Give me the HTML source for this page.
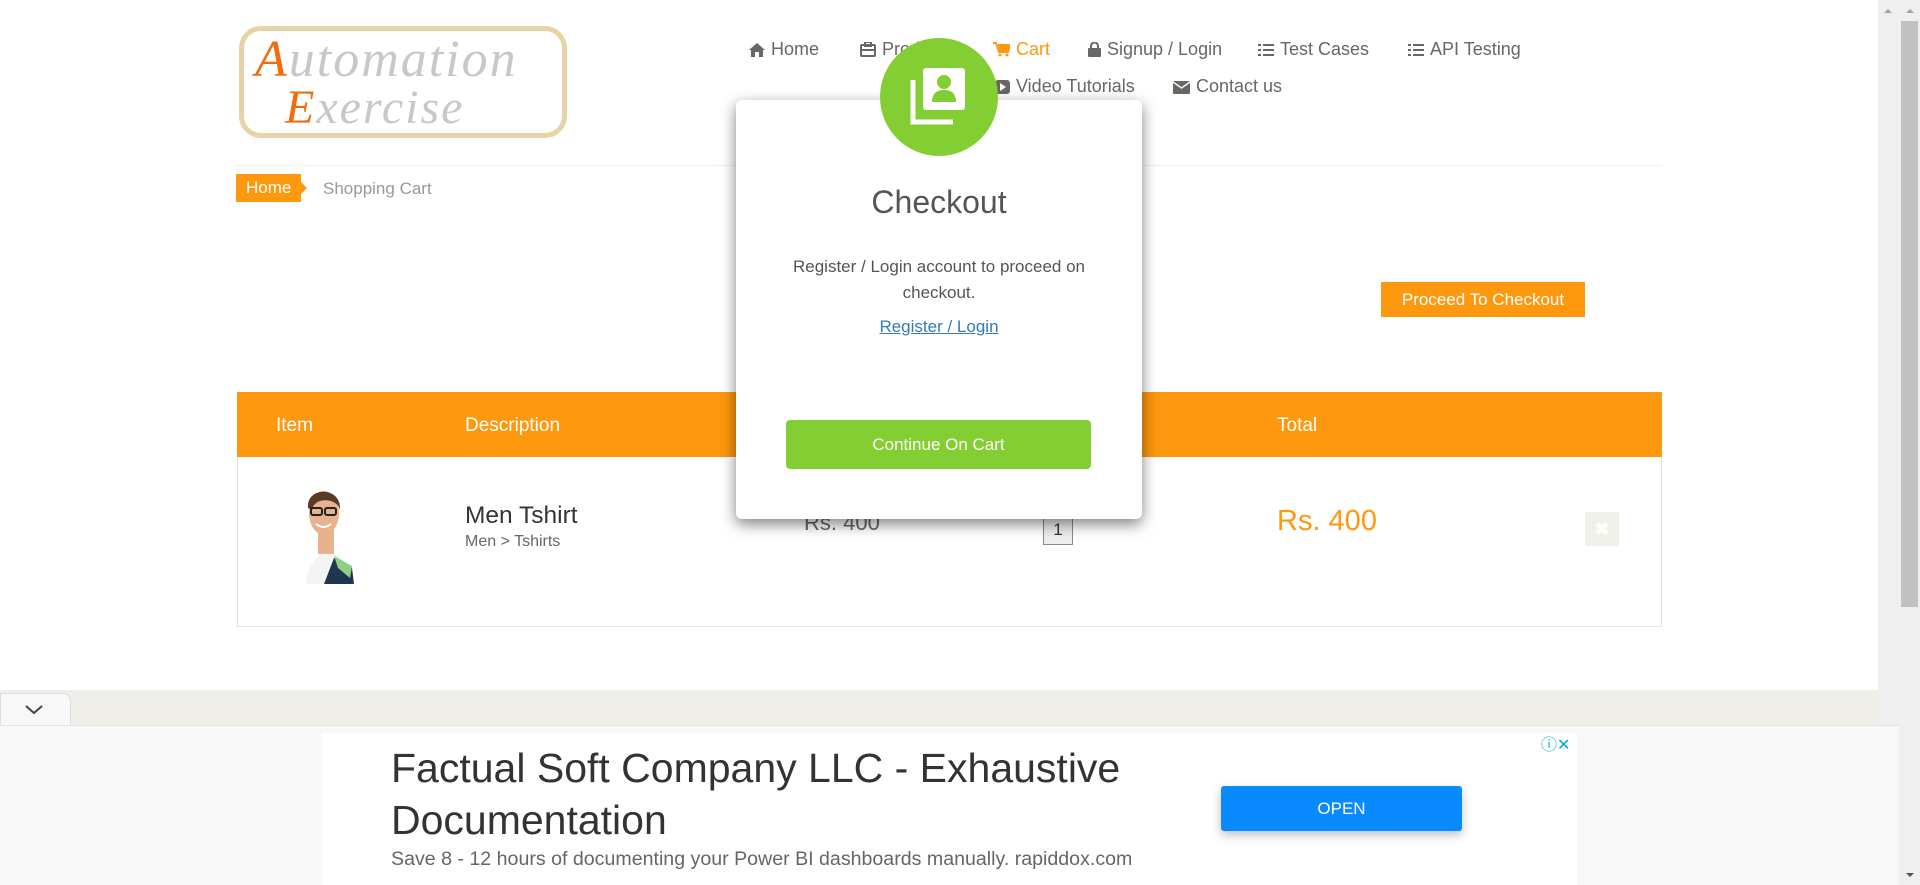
<!DOCTYPE html>
<html><head><meta charset="utf-8"><style>
*{margin:0;padding:0;box-sizing:border-box}
body{width:1920px;height:885px;overflow:hidden;background:#fff;font-family:"Liberation Sans",Arial,sans-serif;position:relative;color:#696763}
.a{position:absolute}
.nav{font-size:18px;color:#696763;white-space:nowrap}
.nav svg{vertical-align:-2px;margin-right:6px}
</style></head><body>
<div class="a" style="left:239px;top:26px;width:328px;height:112px;border:5px solid #e6d3a6;border-radius:22px;background:#fff"></div>
<div class="a" style="left:255px;top:30px;font-family:'Liberation Serif',serif;font-style:italic;font-size:52px;color:#c8c8c8;letter-spacing:2px"><span style="color:#f06d0f">A</span>utomation</div>
<div class="a" style="left:285px;top:80px;font-family:'Liberation Serif',serif;font-style:italic;font-size:48px;color:#c8c8c8;letter-spacing:2px"><span style="color:#f06d0f">E</span>xercise</div>
<div class="a nav" style="left:749px;top:39px"><svg width="16" height="14" viewBox="0 0 16 14"><path d="M8 0L0 7h2v7h4V9h4v5h4V7h2z" fill="#696763"/></svg>Home</div>
<div class="a nav" style="left:860px;top:39px"><svg width="16" height="15" viewBox="0 0 16 15"><rect x="1" y="3" width="14" height="11" rx="1" fill="none" stroke="#696763" stroke-width="2"/><rect x="5" y="0" width="6" height="4" fill="none" stroke="#696763" stroke-width="2"/><path d="M1 8h14" stroke="#696763" stroke-width="2"/></svg>Products</div>
<div class="a nav" style="left:993px;top:39px;color:#fe980f"><svg width="17" height="15" viewBox="0 0 17 15"><path d="M0 1h3l3 9h9l2-7H5" fill="none" stroke="#fe980f" stroke-width="2"/><circle cx="7" cy="13" r="1.5" fill="#fe980f"/><circle cx="14" cy="13" r="1.5" fill="#fe980f"/><path d="M5 3h12l-2 7H7z" fill="#fe980f"/></svg>Cart</div>
<div class="a nav" style="left:1088px;top:39px"><svg width="13" height="15" viewBox="0 0 13 15"><rect x="0" y="6" width="13" height="9" rx="1" fill="#696763"/><path d="M3 6V4a3.5 3.5 0 0 1 7 0v2" fill="none" stroke="#696763" stroke-width="2"/></svg>Signup / Login</div>
<div class="a nav" style="left:1258px;top:39px"><svg width="16" height="14" viewBox="0 0 16 14"><path d="M0 1h3v2H0zM5 1h11v2H5zM0 6h3v2H0zM5 6h11v2H5zM0 11h3v2H0zM5 11h11v2H5z" fill="#696763"/></svg>Test Cases</div>
<div class="a nav" style="left:1408px;top:39px"><svg width="16" height="14" viewBox="0 0 16 14"><path d="M0 1h3v2H0zM5 1h11v2H5zM0 6h3v2H0zM5 6h11v2H5zM0 11h3v2H0zM5 11h11v2H5z" fill="#696763"/></svg>API Testing</div>
<div class="a nav" style="left:995px;top:76px"><svg width="15" height="14" viewBox="0 0 15 14"><rect width="15" height="14" rx="3" fill="#696763"/><path d="M5 3l6 4-6 4z" fill="#fff"/></svg>Video Tutorials</div>
<div class="a nav" style="left:1173px;top:76px"><svg width="17" height="13" viewBox="0 0 17 13"><rect width="17" height="13" rx="1" fill="#696763"/><path d="M0 1l8.5 6L17 1" fill="none" stroke="#fff" stroke-width="1.5"/></svg>Contact us</div>
<div class="a" style="left:236px;top:165px;width:1426px;height:1px;background:#f0f0e9"></div>
<div class="a" style="left:236px;top:174px;width:65px;height:28px;background:#fe980f;color:#fff;font-size:17px;line-height:28px;padding-left:10px">Home</div>
<div class="a" style="left:301px;top:182px;width:0;height:0;border-top:6px solid transparent;border-bottom:6px solid transparent;border-left:6px solid #fe980f"></div>
<div class="a" style="left:323px;top:179px;font-size:17px;color:#999">Shopping Cart</div>
<div class="a" style="left:1381px;top:282px;width:204px;height:35px;background:#fe980f;color:#fff;font-size:17px;line-height:35px;text-align:center">Proceed To Checkout</div>
<div class="a" style="left:237px;top:392px;width:1425px;height:235px;border:1px solid #e6e4df"></div>
<div class="a" style="left:237px;top:392px;width:1425px;height:65px;background:#fe980f"></div>
<div class="a" style="left:276px;top:415px;color:#fff;font-size:19px">Item</div>
<div class="a" style="left:465px;top:415px;color:#fff;font-size:19px">Description</div>
<div class="a" style="left:804px;top:415px;color:#fff;font-size:19px">Price</div>
<div class="a" style="left:1043px;top:415px;color:#fff;font-size:19px">Quantity</div>
<div class="a" style="left:1277px;top:415px;color:#fff;font-size:19px">Total</div>
<svg class="a" style="left:284px;top:478px" width="84" height="106" viewBox="0 0 84 106">
<path d="M22 106 C24 88 32 76 44 74 C58 76 64 86 66 106z" fill="#f4f4f4"/>
<path d="M40 106 L50 80 L68 90 L70 106z" fill="#1f3550"/>
<path d="M50 78 L68 88 L66 100 L54 90z" fill="#8fce86"/>
<rect x="34" y="52" width="16" height="24" fill="#e7b28d"/>
<ellipse cx="40" cy="35" rx="15" ry="22" fill="#e7b28d"/>
<path d="M24 30 C22 8 58 8 56 32 C54 20 30 18 28 32z" fill="#5a3a24"/>
<rect x="27" y="30" width="11" height="7" rx="2" fill="none" stroke="#222" stroke-width="2"/><rect x="41" y="30" width="11" height="7" rx="2" fill="none" stroke="#222" stroke-width="2"/>
<path d="M32 46q8 6 15 0" fill="none" stroke="#fff" stroke-width="2"/>
</svg>
<div class="a" style="left:465px;top:502px;font-size:24.5px;color:#363432">Men Tshirt</div>
<div class="a" style="left:465px;top:533px;font-size:16px;color:#696763">Men &gt; Tshirts</div>
<div class="a" style="left:804px;top:510px;font-size:22px;color:#696763">Rs. 400</div>
<div class="a" style="left:1043px;top:514px;width:30px;height:31px;border:1px solid #888;background:#eee;font-size:17px;text-align:center;line-height:30px;color:#333">1</div>
<div class="a" style="left:1277px;top:505px;font-size:29px;color:#fe980f">Rs. 400</div>
<div class="a" style="left:1585px;top:512px;width:34px;height:34px;background:#f0f0e9;color:#fff;font-size:18px;font-weight:bold;text-align:center;line-height:34px">✖</div>
<div class="a" style="left:736px;top:100px;width:406px;height:419px;background:#fff;border-radius:6px;box-shadow:0 5px 15px rgba(0,0,0,.5)"></div>
<div class="a" style="left:880px;top:38px;width:118px;height:118px;border-radius:50%;background:#83ce33"></div>
<svg class="a" style="left:906px;top:64px" width="66" height="66" viewBox="0 0 66 66">
<rect x="17" y="4" width="42" height="42" rx="3" fill="#fff"/>
<path d="M7 16v42h40" fill="none" stroke="#fff" stroke-width="5"/>
<circle cx="38" cy="18" r="7" fill="#83ce33"/>
<path d="M26 38c0-9 5-12 12-12s12 3 12 12z" fill="#83ce33"/>
</svg>
<div class="a" style="left:736px;top:184px;width:406px;text-align:center;font-size:32px;color:#555">Checkout</div>
<div class="a" style="left:776px;top:254px;width:326px;text-align:center;font-size:17px;line-height:26px;color:#555">Register / Login account to proceed on checkout.</div>
<div class="a" style="left:736px;top:317px;width:406px;text-align:center;font-size:17px;color:#337ab7;text-decoration:underline">Register / Login</div>
<div class="a" style="left:786px;top:420px;width:305px;height:49px;background:#83ce33;border-radius:4px;color:#fff;font-size:17px;text-align:center;line-height:49px">Continue On Cart</div>
<div class="a" style="left:0;top:690px;width:1878px;height:35px;background:#efeee8"></div>
<div class="a" style="left:0;top:693px;width:71px;height:33px;background:#f8f8f8;border:1px solid #ddd;border-bottom:none;border-radius:0 8px 0 0"></div>
<svg class="a" style="left:25px;top:705px" width="18" height="10" viewBox="0 0 18 10"><path d="M1 1l8 7 8-7" fill="none" stroke="#444" stroke-width="2"/></svg>
<div class="a" style="left:0;top:725px;width:1899px;height:160px;background:#f8f8f8;border-top:1px solid #e4e4e4"></div>
<div class="a" style="left:322px;top:733px;width:1255px;height:152px;background:#fff"></div>
<div class="a" style="left:1541px;top:731px;font-size:16px;color:#00aecd">ⓘ✕</div>
<div class="a" style="left:391px;top:742px;font-size:41px;line-height:52px;color:#333;width:820px">Factual Soft Company LLC - Exhaustive Documentation</div>
<div class="a" style="left:391px;top:848px;font-size:19.6px;color:#666">Save 8 - 12 hours of documenting your Power BI dashboards manually. rapiddox.com</div>
<div class="a" style="left:1221px;top:786px;width:241px;height:45px;background:#0a8aff;border-radius:3px;box-shadow:0 4px 10px rgba(0,0,0,.25);color:#fff;font-size:17px;text-align:center;line-height:45px">OPEN</div>
<div class="a" style="left:1878px;top:0;width:21px;height:725px;background:#efefef"></div>
<div class="a" style="left:1884px;top:9px;width:0;height:0;border-left:4px solid transparent;border-right:4px solid transparent;border-bottom:4px solid #a3a3a3"></div>
<div class="a" style="left:1899px;top:0;width:21px;height:885px;background:#efefef"></div>
<div class="a" style="left:1901px;top:21px;width:17px;height:586px;background:#c1c1c1"></div>
<div class="a" style="left:1906px;top:9px;width:0;height:0;border-left:4px solid transparent;border-right:4px solid transparent;border-bottom:4px solid #a3a3a3"></div>
<div class="a" style="left:1906px;top:873px;width:0;height:0;border-left:4px solid transparent;border-right:4px solid transparent;border-top:4px solid #505050"></div>
</body></html>
